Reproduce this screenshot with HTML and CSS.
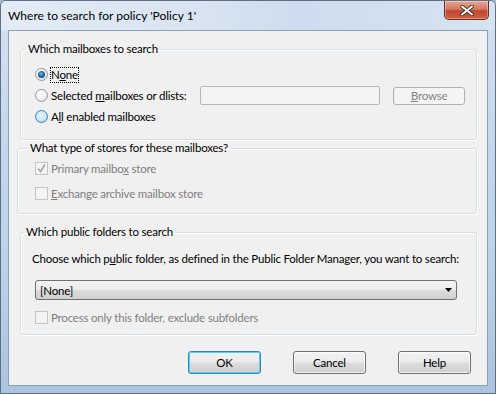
FILE: index.html
```html
<!DOCTYPE html>
<html lang="en">
  <head>
    <meta charset="UTF-8" />
    <title>Where to search for policy 'Policy 1'</title>
    <link rel="stylesheet" href="styles.css">
  </head>
  <body>
    <div class="window">
      <div class="titlebar">
        <span class="title">Where to search for policy 'Policy 1'</span>
        <div class="close">
          <svg width="14" height="11" viewBox="0 0 14 11">
            <path d="M2 1.5 L12 9.5 M12 1.5 L2 9.5" stroke="#3b2a2a" stroke-width="3.6" stroke-linecap="round" />
            <path d="M2 1.5 L12 9.5 M12 1.5 L2 9.5" stroke="#ffffff" stroke-width="2" stroke-linecap="round" />
          </svg>
        </div>
      </div>

      <div class="client">
        <fieldset class="group group-mailboxes">
          <legend>Which mailboxes to search</legend>
          <div class="row">
            <span class="radio checked"></span>
            <span class="focus">N<u>o</u>ne</span>
          </div>
          <div class="row">
            <div class="pick">
              <span class="radio"></span>
              <span>Selected <u>m</u>ailboxes or dlists:</span>
            </div>
            <div class="textbox"></div>
            <div class="btn small disabled"><u>B</u>rowse</div>
          </div>
          <div class="row">
            <span class="radio hover"></span>
            <span>A<u>l</u>l enabled mailboxes</span>
          </div>
        </fieldset>

        <fieldset class="group group-stores">
          <legend>What type of stores for these mailboxes?</legend>
          <div class="row tall first disabled">
            <span class="check checked">
              <svg width="11" height="11" viewBox="0 0 11 11">
                <path d="M2 5.5 L4.5 8.5 L9 1.5" fill="none" stroke="#a3a3a3" stroke-width="1.6" />
              </svg>
            </span>
            <span>Primary mailbo<u>x</u> store</span>
          </div>
          <div class="row tall disabled">
            <span class="check"></span>
            <span><u>E</u>xchange archive mailbox store</span>
          </div>
        </fieldset>

        <fieldset class="group group-folders">
          <legend>Which public folders to search</legend>
          <p class="hint">Choose which p<u>u</u>blic folder, as defined in the Public Folder Manager, you want to search:</p>
          <div class="combo">
            <span>[None]</span>
            <svg width="7" height="4" viewBox="0 0 7 4">
              <path d="M0 0 H7 L3.5 4 Z" fill="#000" />
            </svg>
          </div>
          <div class="row last disabled">
            <span class="check"></span>
            <span>Process only this folder, exclude subfolders</span>
          </div>
        </fieldset>

        <div class="buttons">
          <div class="btn default">OK</div>
          <div class="btn">Cancel</div>
          <div class="btn">Help</div>
        </div>
      </div>
    </div>
  </body>
</html>
```

FILE: styles.css
```css
body {
  margin: 0;
  background: #9fb7d0;
}
.window {
  width: 496px;
  height: 394px;
  box-sizing: border-box;
  display: flex;
  flex-direction: column;
  border: 1px solid #5f7085;
  border-radius: 6px 6px 0 0;
  background: linear-gradient(180deg, #d5e3f1 0%, #c6d8ec 30%, #bcd1e8 70%, #aac3de 100%);
  font-family: "Segoe UI", Lato, "Noto Sans", sans-serif;
  font-size: 11.5px;
  letter-spacing: -0.2px;
  color: #000;
}
.titlebar {
  height: 29px;
  display: flex;
  justify-content: space-between;
  align-items: flex-start;
  padding-left: 7px;
  background: linear-gradient(90deg, #e3ecf6 0%, #d8e4f1 40%, #cddcee 60%, #d6e3f1 100%);
  border-radius: 5px 5px 0 0;
}
.title {
  margin-top: 7px;
  line-height: 16px;
  font-size: 12px;
  letter-spacing: 0;
  color: #000;
}
.close {
  width: 45px;
  height: 19px;
  margin-right: 6px;
  box-sizing: border-box;
  display: flex;
  justify-content: center;
  align-items: center;
  border: 1px solid #6b2a22;
  border-top: none;
  border-radius: 0 0 5px 5px;
  background: linear-gradient(180deg, #e8a493 0%, #d47865 45%, #c14530 55%, #d0603f 100%);
  box-shadow: inset 0 0 0 1px rgba(255, 255, 255, 0.35);
}
.client {
  flex: 1;
  margin: 0 7px 7px 7px;
  padding-top: 10px;
  border: 1px solid #8aa1ba;
  background: #f0f0f0;
  display: flex;
  flex-direction: column;
}
.group {
  margin: 0 10px 0 11px;
  padding: 7px 0 12px 14px;
  border: 1px solid #d5dfe5;
  border-radius: 3px;
  box-shadow: 1px 1px 0 #fff, inset 1px 1px 0 #fff;
  min-width: 0;
}
.group legend {
  padding: 0 2px;
  margin-left: -9px;
  line-height: 16px;
}
.group-stores {
  margin: 0 10px 0 8px;
  padding: 0 0 7px 17px;
}
.group-stores legend {
  margin-left: -7px;
}
.row.first {
  height: 24px;
}
.group-folders {
  margin-top: 10px;
  padding: 11px 0 6px 11px;
}
.group-folders legend {
  margin-left: -8px;
}
.row {
  height: 21px;
  display: flex;
  align-items: center;
  gap: 3px;
}
.row.tall {
  height: 25px;
}
.row.last {
  height: 22px;
  margin-top: 6px;
  padding-left: 3px;
}
.disabled {
  color: #7f7f7f;
}
.pick {
  width: 162px;
  display: flex;
  align-items: center;
  gap: 3px;
}
.radio {
  width: 13px;
  height: 13px;
  box-sizing: border-box;
  border-radius: 50%;
  border: 1px solid #8f9aa3;
  background: radial-gradient(circle at 40% 35%, #ffffff 0%, #f0f0f0 50%, #d4d6d8 100%);
  display: flex;
  justify-content: center;
  align-items: center;
}
.radio.checked::after {
  content: "";
  width: 7px;
  height: 7px;
  border-radius: 50%;
  background: radial-gradient(circle at 45% 40%, #6fb5e0 0%, #1b5e93 55%, #0c3356 100%);
}
.radio.hover {
  border-color: #3c7fb1;
  background: radial-gradient(circle at 45% 40%, #e9f8ff 0%, #bfe5f8 60%, #8fc9ea 100%);
}
.focus {
  outline: 1px dotted #000;
  outline-offset: 0;
  line-height: 14px;
}
.check {
  width: 13px;
  height: 13px;
  box-sizing: border-box;
  border: 1px solid #c4c4c4;
  background: #f4f4f4;
  display: flex;
  justify-content: center;
  align-items: center;
}
.textbox {
  width: 180px;
  height: 19px;
  box-sizing: border-box;
  border: 1px solid #b4b8bc;
  border-radius: 2px;
  background: #f4f4f4;
}
.btn {
  width: 73px;
  height: 23px;
  box-sizing: border-box;
  display: flex;
  justify-content: center;
  align-items: center;
  border: 1px solid #707070;
  border-radius: 3px;
  background: linear-gradient(180deg, #f3f3f3 0%, #ebebeb 49%, #dddddd 51%, #cfcfcf 100%);
  box-shadow: inset 0 0 0 1px rgba(255, 255, 255, 0.7);
}
.btn.small {
  width: 72px;
  height: 18px;
  margin-left: 10px;
}
.btn.disabled {
  border-color: #adb2b5;
  background: #f4f4f4;
  box-shadow: none;
  color: #838383;
}
.btn.default {
  border-color: #3c7fb1;
  box-shadow: inset 0 0 0 1px #48d5f8;
}
.hint {
  margin: 0 0 13px 0;
  line-height: 16px;
}
.combo {
  height: 20px;
  margin-left: 3px;
  margin-right: 19px;
  box-sizing: border-box;
  display: flex;
  justify-content: space-between;
  align-items: center;
  padding: 0 4px 0 4px;
  border: 1px solid #707070;
  border-radius: 3px;
  background: linear-gradient(180deg, #f3f3f3 0%, #ebebeb 49%, #dddddd 51%, #cfcfcf 100%);
}
.buttons {
  margin-top: 16px;
  padding-right: 16px;
  display: flex;
  justify-content: flex-end;
  gap: 32px;
}
```
